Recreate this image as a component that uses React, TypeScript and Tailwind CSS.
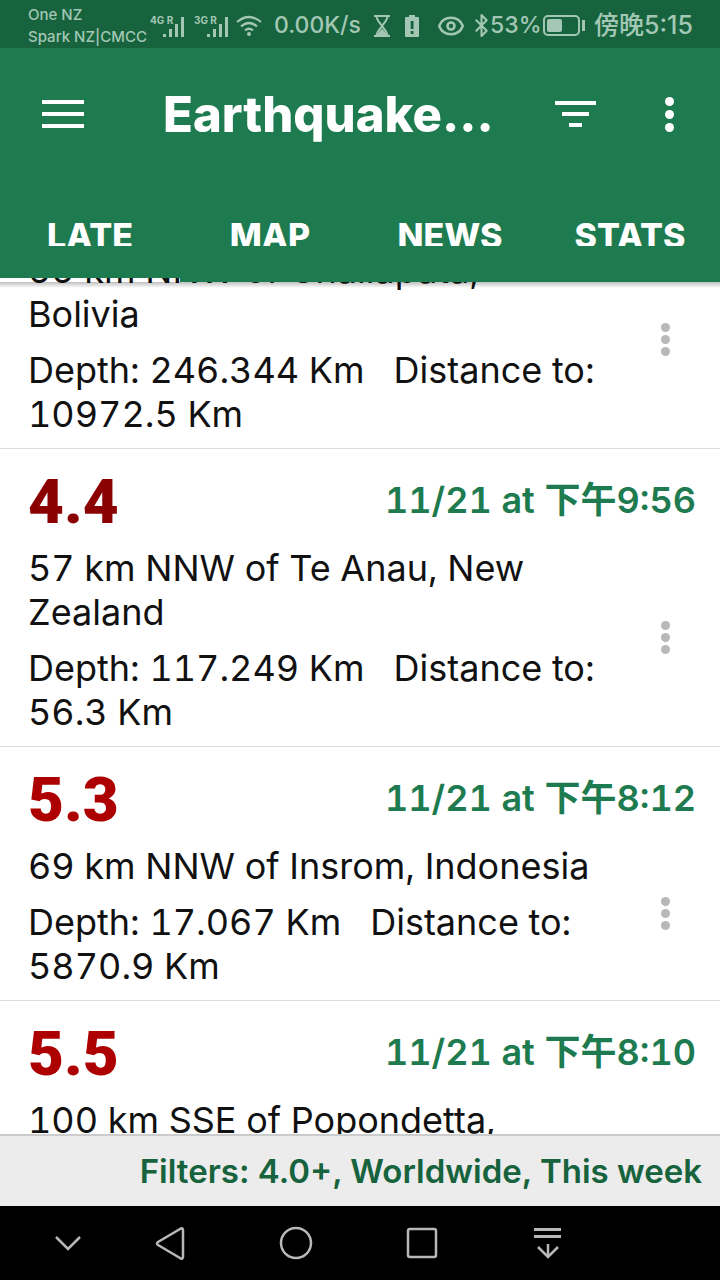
import { Bluetooth, Eye } from "lucide-react";

const bodyFont = { fontFamily: 'Inter, "Noto Sans CJK SC", sans-serif' };
const magFont = { fontFamily: 'Roboto, sans-serif' };

interface Quake {
    mag: string;
    color: string;
    when: string;
    place: string[];
    depth: string;
    distance: string[];
    dotsTop: string;
}

const quakes: Quake[] = [
    {
        mag: "4.4",
        color: "text-[#8b0000]",
        when: "11/21 at 下午9:56",
        place: ["57 km NNW of Te Anau, New", "Zealand"],
        depth: "Depth: 117.249 Km",
        distance: ["56.3 Km"],
        dotsTop: "top-[172px]",
    },
    {
        mag: "5.3",
        color: "text-[#ad0000]",
        when: "11/21 at 下午8:12",
        place: ["69 km NNW of Insrom, Indonesia"],
        depth: "Depth: 17.067 Km",
        distance: ["5870.9 Km"],
        dotsTop: "top-[150px]",
    },
];

const Dots = () => (
    <div className="flex flex-col items-center gap-[3px]">
        <span className="w-[9px] h-[9px] rounded-full bg-[#b8b8b8]" />
        <span className="w-[9px] h-[9px] rounded-full bg-[#b8b8b8]" />
        <span className="w-[9px] h-[9px] rounded-full bg-[#b8b8b8]" />
    </div>
);

const Signal = ({ label }: { label: string }) => (
    <div className="flex items-end h-[24px] w-[37px] relative">
        <span className="absolute left-0 top-[1px] text-[10px] leading-[10px] font-bold">{label}</span>
        <div className="flex items-end gap-[3px] ml-[13px] mb-[1px]">
            <span className="w-[3px] h-[3px] bg-[#a3c7b4]" />
            <span className="w-[3px] h-[8px] bg-[#a3c7b4]" />
            <span className="w-[3px] h-[13px] bg-[#a3c7b4]" />
            <span className="w-[3px] h-[20px] bg-[#a3c7b4]" />
        </div>
    </div>
);

const StatusBar = () => (
    <div className="h-[48px] bg-[#16633d] flex items-center text-[#a3c7b4] pl-[28px] pt-[3px] shrink-0 whitespace-nowrap">
        <div className="text-[15px] leading-[22px] font-medium w-[122px]">
            <div>One NZ</div>
            <div>Spark NZ|CMCC</div>
        </div>
        <div className="flex items-center gap-[7px] w-[85px]">
            <Signal label="4G R" />
            <Signal label="3G R" />
        </div>
        <svg width="28" height="24" viewBox="0 0 28 24" fill="none" stroke="currentColor" strokeWidth="2.2">
            <path d="M2 8 Q14 -2 26 8" />
            <path d="M6 12.5 Q14 5.5 22 12.5" />
            <path d="M10 16.5 Q14 13 18 16.5" />
            <circle cx="14" cy="20" r="2" fill="currentColor" stroke="none" />
        </svg>
        <span className="ml-[11px] w-[84px] text-[23px] font-medium">0.00K/s</span>
        <svg width="18" height="24" viewBox="0 0 18 24" className="ml-[15px]" fill="none" stroke="currentColor" strokeWidth="2">
            <path d="M1 2h16M1 22h16M3.500 2c0 4 3.500 7 5.500 10 2 3 5.500 6 5.500 10M14.500 2c0 4-3.500 7-5.500 10-2 3-5.500 6-5.500 10" />
            <path d="M5 21l4-5 4 5z" fill="currentColor" />
        </svg>
        <svg width="14" height="24" viewBox="0 0 14 24" className="ml-[14px]">
            <path fill="currentColor" d="M4 1h6v2h3a1 1 0 0 1 1 1v18a1 1 0 0 1-1 1H1a1 1 0 0 1-1-1V4a1 1 0 0 1 1-1h3z" />
            <rect x="5.700" y="7" width="2.800" height="8" fill="#16633d" />
            <rect x="5.700" y="17" width="2.800" height="3" fill="#16633d" />
        </svg>
        <Eye className="ml-[18px]" size={28} strokeWidth={2.2} />
        <Bluetooth className="ml-[4px]" size={25} strokeWidth={2} />
        <span className="text-[23px] font-medium -ml-[4px] w-[53px]">53%</span>
        <div className="w-[37px] h-[21px] rounded-[5px] border-2 border-[#a3c7b4] p-[2px]">
            <div className="w-[53%] h-full rounded-[2px] bg-[#a3c7b4]" />
        </div>
        <span className="ml-[2px] w-[3px] h-[11px] bg-[#a3c7b4]" />
        <span className="ml-[9px] text-[25px] font-medium">傍晚5:15</span>
    </div>
);

const AppBar = () => (
    <div className="h-[230px] bg-[#1d7b4f] text-white shrink-0 flex flex-col">
        <div className="flex items-center h-[132px] pl-[42px]">
            <div className="flex flex-col gap-[8px] w-[42px]">
                <span className="h-[4px] bg-white" />
                <span className="h-[4px] bg-white" />
                <span className="h-[4px] bg-white" />
            </div>
            <div className="ml-[79px] w-[392px] text-[49px] font-extrabold leading-none whitespace-nowrap">Earthquake...</div>
            <div className="flex flex-col items-center gap-[7px] w-[41px]">
                <span className="w-[41px] h-[4px] bg-white" />
                <span className="w-[27px] h-[4px] bg-white" />
                <span className="w-[13px] h-[4px] bg-white" />
            </div>
            <div className="flex flex-col gap-[4px] ml-[69px]">
                <span className="w-[9px] h-[9px] rounded-full bg-white" />
                <span className="w-[9px] h-[9px] rounded-full bg-white" />
                <span className="w-[9px] h-[9px] rounded-full bg-white" />
            </div>
        </div>
        <div className="grid grid-cols-4 h-[66px]">
            {["LATE", "MAP", "NEWS", "STATS"].map((tab) => (
                <div key={tab} className="flex justify-center pt-[31px] text-[34px] font-extrabold leading-[50px] overflow-hidden">
                    {tab}
                </div>
            ))}
        </div>
    </div>
);

const Row = ({ q }: { q: Quake }) => (
    <div className="border-b border-[#dcdcdc] pl-[28px] pr-[24px] pb-[12px] relative">
        <div className="flex items-center justify-between h-[97px] pt-[8px]">
            <span className={`text-[62px] font-black leading-none ${q.color}`} style={magFont}>{q.mag}</span>
            <span className="text-[36px] font-semibold tabular-nums text-[#1d7b4f] leading-none mb-[3px]">{q.when}</span>
        </div>
        <div className="text-[36px] tabular-nums leading-[44px] text-[#111111] pr-[40px]">
            {q.place.map((line) => (
                <div key={line}>{line}</div>
            ))}
        </div>
        <div className="text-[36px] tabular-nums leading-[44px] text-[#111111] mt-[12px]">
            <div className="whitespace-pre">{q.depth + "   Distance to:"}</div>
            {q.distance.map((line) => (
                <div key={line}>{line}</div>
            ))}
        </div>
        <div className={`absolute right-[50px] ${q.dotsTop}`}>
            <Dots />
        </div>
    </div>
);

export default function App() {
    return (
        <div className="w-[720px] h-[1280px] overflow-hidden flex flex-col bg-white" style={bodyFont}>
            <StatusBar />
            <AppBar />
            <div className="flex-1 min-h-0 overflow-hidden relative">
                <div className="absolute left-[180px] right-0 top-0 h-[4px] bg-[#1d7b4f] z-10" />
                <div className="absolute left-0 right-0 top-[4px] h-[6px] bg-gradient-to-b from-black/25 to-transparent z-10" />
                <div className="-mt-[30px] border-b border-[#dcdcdc] pl-[28px] pr-[24px] pb-[12px] relative text-[36px] tabular-nums leading-[44px] text-[#111111]">
                    <div>55 km NNW of Challapata,</div>
                    <div>Bolivia</div>
                    <div className="mt-[12px] whitespace-pre">{"Depth: 246.344 Km   Distance to:"}</div>
                    <div>10972.5 Km</div>
                    <div className="absolute right-[50px] top-[75px]">
                        <Dots />
                    </div>
                </div>
                {quakes.map((q) => (
                    <Row key={q.mag} q={q} />
                ))}
                <div className="pl-[28px] pr-[24px]">
                    <div className="flex items-center justify-between h-[97px] pt-[8px]">
                        <span className="text-[62px] font-black leading-none text-[#ad0000]" style={magFont}>5.5</span>
                        <span className="text-[36px] font-semibold tabular-nums text-[#1d7b4f] leading-none mb-[3px]">11/21 at 下午8:10</span>
                    </div>
                    <div className="text-[36px] tabular-nums leading-[44px] text-[#111111]">100 km SSE of Popondetta,</div>
                </div>
            </div>
            <div className="h-[72px] shrink-0 bg-[#ececec] border-t-2 border-[#cccccc] flex items-center justify-end pr-[18px] pt-[1px] text-[33px] font-semibold text-[#16633d] whitespace-nowrap">
                Filters: 4.0+, Worldwide, This week
            </div>
            <div className="h-[74px] shrink-0 bg-black">
                <svg width="720" height="74" viewBox="0 0 720 74" fill="none" stroke="#b8b8b8" strokeWidth="2.500">
                    <path d="M56 31 L68 43 L80 31" />
                    <path d="M183 24 L183 51 Q182.500 54 180 52 L158 39 Q156 37.500 158 36 L180 23 Q182.500 21 183 24Z" />
                    <circle cx="296" cy="37" r="15" />
                    <rect x="408" y="23" width="28" height="28" rx="2" />
                    <path d="M534 23.500 H561 M534 30.500 H561" strokeWidth="3" />
                    <path d="M548 38 V51 M538 41 L548 51 L558 41" />
                </svg>
            </div>
        </div>
    );
}
